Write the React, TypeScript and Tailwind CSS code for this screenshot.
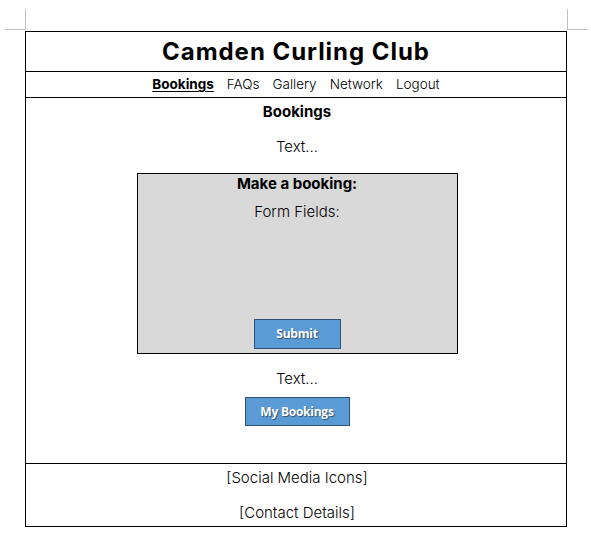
const mont = "font-['Inter','Noto_Sans',sans-serif]";

function CornerMark({ side }: { side: "left" | "right" }) {
  return (
    <div
      className={
        side === "left"
          ? "h-[21px] w-[21px] border-b border-r border-[#bfbfbf]"
          : "h-[21px] w-[21px] border-b border-l border-[#bfbfbf]"
      }
    />
  );
}

function BlueButton({ label, className }: { label: string; className: string }) {
  return (
    <button
      type="button"
      className={`flex items-center justify-center border border-[#2f5375] bg-[#5b9bd5] font-['Open_Sans',sans-serif] text-[12px] font-bold tracking-[-0.02em] text-white [text-shadow:1px_1px_1px_rgba(0,0,0,0.45)] ${className}`}
    >
      {label}
    </button>
  );
}

export default function App() {
  const nav = ["Bookings", "FAQs", "Gallery", "Network", "Logout"];

  return (
    <div className={`min-h-[538px] w-[591px] bg-white text-black ${mont}`}>
      <div className="flex justify-between pl-[5px] pr-[3px] pt-[9px] pb-px">
        <CornerMark side="left" />
        <CornerMark side="right" />
      </div>

      <div className="ml-[25px] w-[542px] border border-black">
        <header className="flex h-[40px] items-center justify-center border-b border-black">
          <h1 className="text-[24px] font-bold leading-none tracking-[0.04em]">Camden Curling Club</h1>
        </header>

        <nav className="flex h-[26px] items-center justify-center gap-[13px] border-b border-black text-[13.5px]">
          {nav.map((item, i) => (
            <a
              key={item}
              className={i === 0 ? "font-bold underline underline-offset-2" : "font-light"}
            >
              {item}
            </a>
          ))}
        </nav>

        <main className="flex h-[366px] flex-col items-center border-b border-black pl-[2px] pt-[4px]">
          <h2 className="text-[15px] font-bold leading-[20px]">Bookings</h2>
          <p className="mt-[15px] text-[15px] font-light leading-[20px]">Text...</p>

          <section className="mt-[16px] flex h-[181px] w-[321px] flex-col items-center border border-black bg-[#d9d9d9] pb-[4px]">
            <h3 className="text-[15px] font-bold leading-[20px]">Make a booking:</h3>
            <p className="mt-[8px] text-[15px] font-light leading-[20px]">Form Fields:</p>
            <BlueButton label="Submit" className="mt-auto h-[30px] w-[87px]" />
          </section>

          <p className="mt-[15px] text-[15px] font-light leading-[20px]">Text...</p>
          <BlueButton label="My Bookings" className="mt-[8px] h-[29px] w-[105px]" />
        </main>

        <footer className="flex h-[62px] flex-col items-center pl-[2px] pt-[4px] text-[15px] font-light leading-[20px]">
          <p>[Social Media Icons]</p>
          <p className="mt-[15px]">[Contact Details]</p>
        </footer>
      </div>
    </div>
  );
}
